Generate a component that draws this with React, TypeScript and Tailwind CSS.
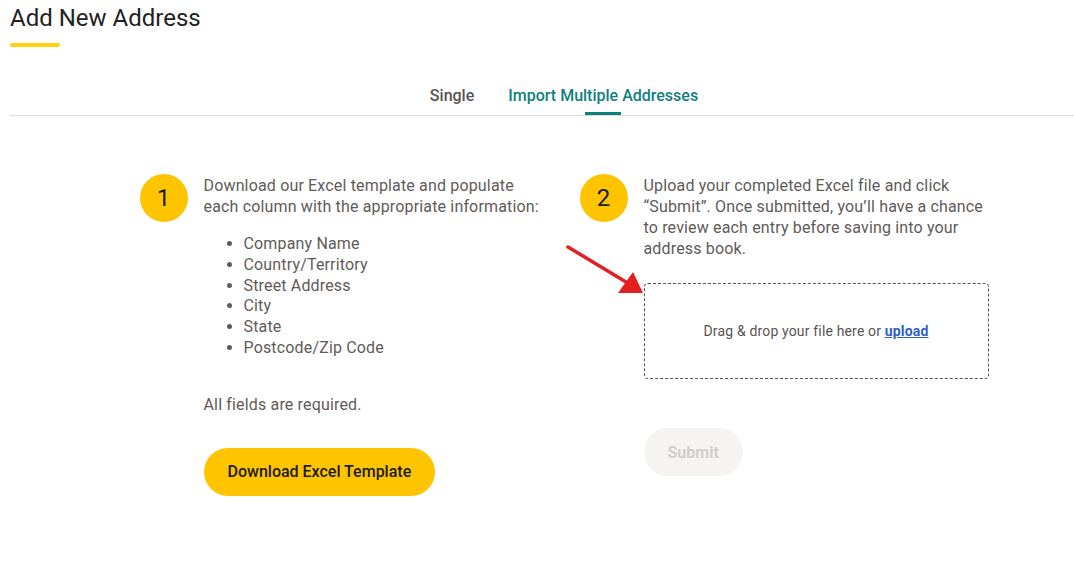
import type { ReactNode } from 'react'

const FIELDS = [
  'Company Name',
  'Country/Territory',
  'Street Address',
  'City',
  'State',
  'Postcode/Zip Code',
]

function StepBadge({ n }: { n: number }) {
  return (
    <div className="flex h-12 w-12 shrink-0 items-center justify-center rounded-full bg-[#ffc400] text-[24px] leading-none text-[#1a1a1a]">
      {n}
    </div>
  )
}

function Step({ n, children }: { n: number; children: ReactNode }) {
  return (
    <div className="flex w-[409px] gap-4">
      <StepBadge n={n} />
      <div className="w-[345px] pt-px">{children}</div>
    </div>
  )
}

function RedArrow() {
  return (
    <svg
      className="pointer-events-none absolute left-0 top-0"
      width="1074"
      height="580"
      viewBox="0 0 1074 580"
    >
      <line x1="568" y1="247" x2="626" y2="282" stroke="#e3201f" strokeWidth="3.5" strokeLinecap="round" />
      <polygon points="643,293 633,272 618,293" fill="#e3201f" />
    </svg>
  )
}

export default function App() {
  return (
    <div
      className="relative h-[580px] w-[1074px] overflow-hidden bg-white text-[#615b58]"
      style={{ fontFamily: 'Roboto, "Liberation Sans", Arial, sans-serif' }}
    >
      <div className="ml-[10px] w-[1108px]">
        <h1 className="pt-[4px] text-[24px] leading-[28px] font-normal text-[#222]">Add New Address</h1>
        <div className="mt-[11px] h-1 w-[50px] rounded-full bg-[#fdd20e]" />

        <div className="mt-[39px] border-b border-[#dcdcdc]">
          <div className="flex justify-center gap-[34px] text-[16px] font-medium leading-[20px]">
            <button className="pb-[9px] text-[#5a5451]">Single</button>
            <button className="relative pb-[9px] text-[#0f7f7b]">
              Import Multiple Addresses
              <span className="absolute bottom-0 left-1/2 h-[3px] w-9 -translate-x-1/2 bg-[#0f7f7b]" />
            </button>
          </div>
        </div>

        <div className="mt-[58px] flex justify-center gap-[31px] text-[16px] leading-[21px] tracking-[0.16px]">
          <Step n={1}>
            <p>
              Download our Excel template and populate each column with the appropriate information:
            </p>
            <ul className="mt-[17px] list-disc pl-10 leading-[20.8px]">
              {FIELDS.map((f) => (
                <li key={f}>{f}</li>
              ))}
            </ul>
            <p className="mt-[35px]">All fields are required.</p>
            <button className="mt-[33px] h-12 rounded-full bg-[#ffc400] px-6 font-medium tracking-normal text-[#1b1b1b]">
              Download Excel Template
            </button>
          </Step>

          <Step n={2}>
            <p>
              Upload your completed Excel file and click “Submit”. Once submitted, you’ll have a chance to
              review each entry before saving into your address book.
            </p>
            <div className="mt-[24px] flex h-24 items-center justify-center rounded border border-dashed border-[#555] text-[14px] text-[#5a5451]">
              <span>
                Drag &amp; drop your file here or{' '}
                <a className="font-bold text-[#2f62c4] underline">upload</a>
              </span>
            </div>
            <button className="mt-[49px] h-12 rounded-full bg-[#f5f4f3] px-6 font-bold tracking-normal text-[#d2cecb]">
              Submit
            </button>
          </Step>
        </div>
      </div>
      <RedArrow />
    </div>
  )
}
